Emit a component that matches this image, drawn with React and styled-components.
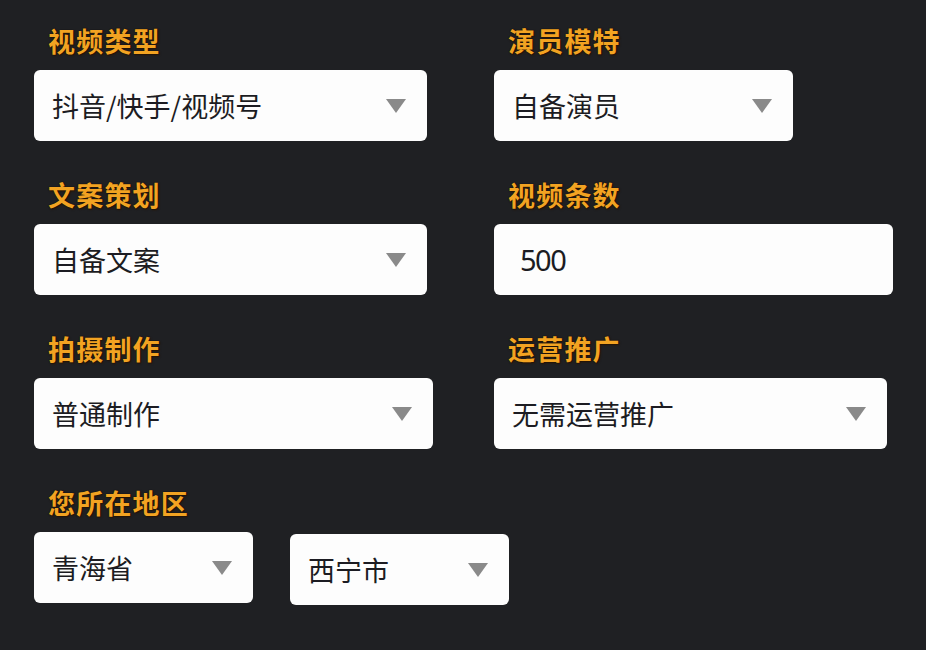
import React from "react";
import styled, { createGlobalStyle } from "styled-components";

const GlobalStyle = createGlobalStyle`
  html, body {
    margin: 0;
    padding: 0;
    background: #1f2023;
  }
  body {
    font-family: "Noto Sans CJK SC", "Noto Sans", sans-serif;
  }
`;

const Page = styled.div`
  width: 926px;
  height: 650px;
  box-sizing: border-box;
  padding: 25px 0 0 34px;
  background: #1f2023;
  overflow: hidden;
`;

const Form = styled.div`
  display: grid;
  grid-template-columns: 460px auto;
  row-gap: 38px;
`;

const Field = styled.div`
  display: flex;
  flex-direction: column;
  gap: 13px;
`;

const Label = styled.div`
  padding-left: 14px;
  font-size: 27px;
  line-height: 32px;
  font-weight: 700;
  letter-spacing: 1.2px;
  color: #f2a322;
  text-shadow: 0 0 1px #000, 1px 1px 2px #2a1500;
`;

const Pair = styled.div`
  display: flex;
  gap: 37px;
  align-items: flex-start;
`;

const Box = styled.div`
  flex-shrink: 0;
  width: ${(p) => p.$w}px;
  height: 71px;
  box-sizing: border-box;
  margin-top: ${(p) => p.$shift || 0}px;
  padding: 0 21px 0 ${(p) => (p.$input ? 26 : 18)}px;
  display: flex;
  align-items: center;
  justify-content: space-between;
  background: #fdfdfd;
  border-radius: 6px;
`;

const Value = styled.span`
  font-size: 27px;
  color: #1c1c22;
  white-space: nowrap;
`;

const Number = styled.span`
  font-family: "Noto Sans", sans-serif;
  font-size: 29px;
  letter-spacing: -1.5px;
  color: #1c1c22;
`;

const Arrow = styled.span`
  width: 0;
  height: 0;
  border-left: 10px solid transparent;
  border-right: 10px solid transparent;
  border-top: 14px solid #8a8a8a;
  margin-top: 1px;
`;

const Select = ({ w, value, shift }) => (
  <Box $w={w} $shift={shift}>
    <Value>{value}</Value>
    <Arrow />
  </Box>
);

const fields = [
  { label: "视频类型", w: 393, value: "抖音/快手/视频号" },
  { label: "演员模特", w: 299, value: "自备演员" },
  { label: "文案策划", w: 393, value: "自备文案" },
  { label: "视频条数", w: 399, input: "500" },
  { label: "拍摄制作", w: 399, value: "普通制作" },
  { label: "运营推广", w: 393, value: "无需运营推广" },
];

export default function App() {
  return (
    <Page>
      <GlobalStyle />
      <Form>
        {fields.map((f) => (
          <Field key={f.label}>
            <Label>{f.label}</Label>
            {f.input ? (
              <Box $w={f.w} $input>
                <Number>{f.input}</Number>
              </Box>
            ) : (
              <Select w={f.w} value={f.value} />
            )}
          </Field>
        ))}
        <Field>
          <Label>您所在地区</Label>
          <Pair>
            <Select w={219} value="青海省" />
            <Select w={219} value="西宁市" shift={2} />
          </Pair>
        </Field>
      </Form>
    </Page>
  );
}
